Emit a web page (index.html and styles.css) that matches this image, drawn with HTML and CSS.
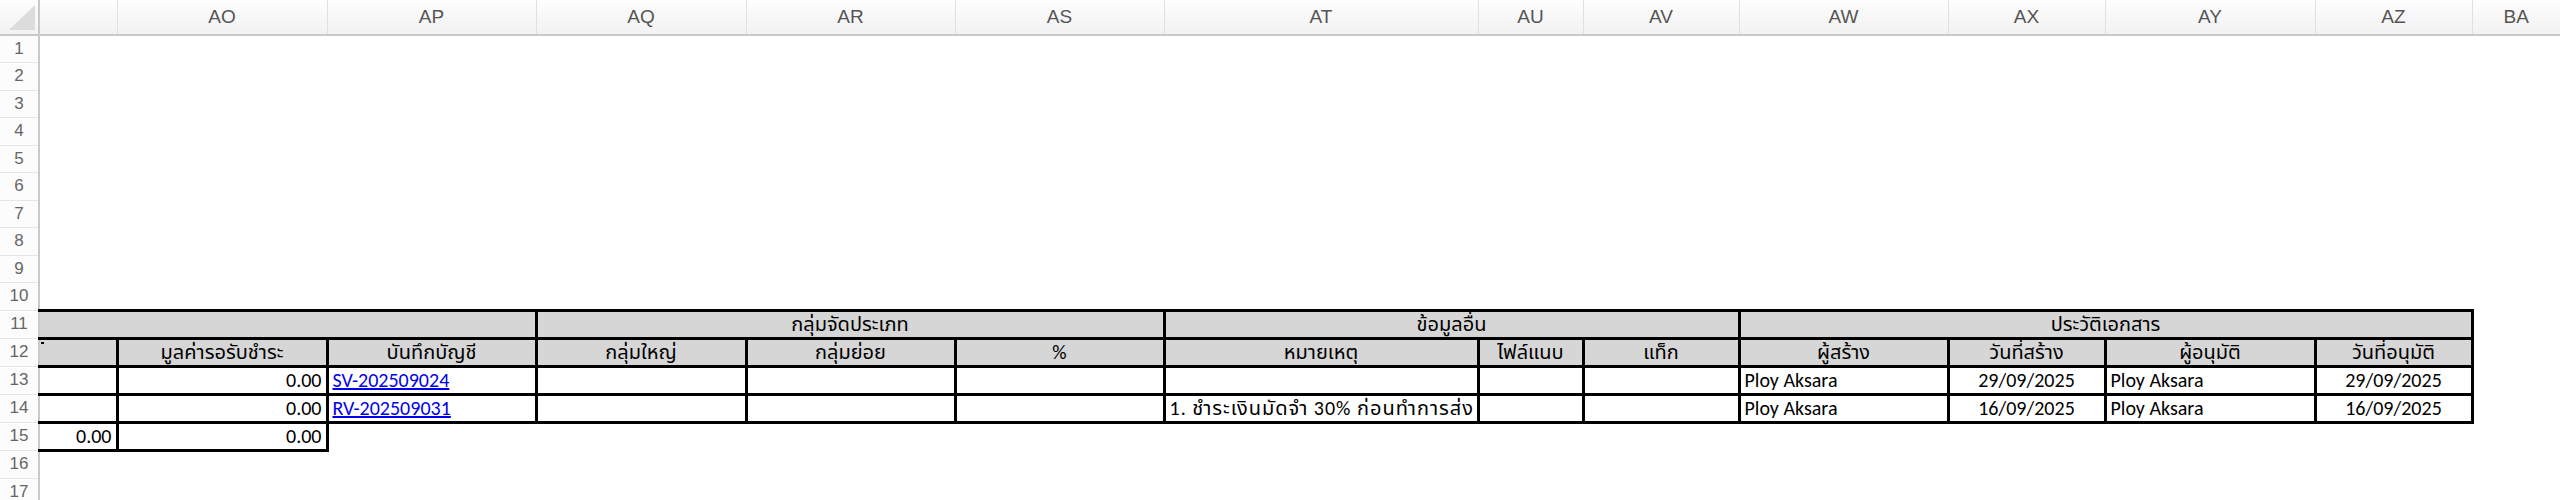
FILE: index.html
```html
<!DOCTYPE html>
<html lang="th">
<head>
<meta charset="utf-8">
<title>Sheet</title>
<link rel="stylesheet" href="styles.css">
</head>
<body>
<table class="sheet">
  <colgroup>
    <col class="c-rh"><col class="c-an"><col class="c-ao"><col class="c-ap"><col class="c-aq"><col class="c-ar"><col class="c-as"><col class="c-at"><col class="c-au"><col class="c-av"><col class="c-aw"><col class="c-ax"><col class="c-ay"><col class="c-az"><col class="c-ba">
  </colgroup>
  <thead>
    <tr class="colhead">
      <th class="corner"><div class="corner-box"><div class="corner-tri"></div></div></th>
      <th></th><th>AO</th><th>AP</th><th>AQ</th><th>AR</th><th>AS</th><th>AT</th><th>AU</th><th>AV</th><th>AW</th><th>AX</th><th>AY</th><th>AZ</th><th class="last">BA</th>
    </tr>
  </thead>
  <tbody>
    <tr class="r27"><th class="rh">1</th><td colspan="14"></td></tr>
    <tr class="r28"><th class="rh">2</th><td colspan="14"></td></tr>
    <tr class="r27"><th class="rh">3</th><td colspan="14"></td></tr>
    <tr class="r28"><th class="rh">4</th><td colspan="14"></td></tr>
    <tr class="r27"><th class="rh">5</th><td colspan="14"></td></tr>
    <tr class="r28"><th class="rh">6</th><td colspan="14"></td></tr>
    <tr class="r27"><th class="rh">7</th><td colspan="14"></td></tr>
    <tr class="r28"><th class="rh">8</th><td colspan="14"></td></tr>
    <tr class="r27"><th class="rh">9</th><td colspan="14"></td></tr>
    <tr class="r28"><th class="rh">10</th><td colspan="14"></td></tr>
    <tr class="r28 grp">
      <th class="rh">11</th>
      <td colspan="3" class="b hd nl top"></td>
      <td colspan="3" class="b hd top">กลุ่มจัดประเภท</td>
      <td colspan="3" class="b hd top">ข้อมูลอื่น</td>
      <td colspan="4" class="b hd top">ประวัติเอกสาร</td>
      <td></td>
    </tr>
    <tr class="r28">
      <th class="rh">12</th>
      <td class="b hd nl lft"><span class="tick"></span></td>
      <td class="b hd">มูลค่ารอรับชำระ</td>
      <td class="b hd">บันทึกบัญชี</td>
      <td class="b hd">กลุ่มใหญ่</td>
      <td class="b hd">กลุ่มย่อย</td>
      <td class="b hd">%</td>
      <td class="b hd">หมายเหตุ</td>
      <td class="b hd">ไฟล์แนบ</td>
      <td class="b hd">แท็ก</td>
      <td class="b hd">ผู้สร้าง</td>
      <td class="b hd">วันที่สร้าง</td>
      <td class="b hd">ผู้อนุมัติ</td>
      <td class="b hd">วันที่อนุมัติ</td>
      <td></td>
    </tr>
    <tr class="r28">
      <th class="rh">13</th>
      <td class="b nl thin-b"></td>
      <td class="b num thin-b">0.00</td>
      <td class="b thin-b"><a class="lnk" href="#">SV-202509024</a></td>
      <td class="b thin-b"></td>
      <td class="b thin-b"></td>
      <td class="b thin-b"></td>
      <td class="b thin-b"></td>
      <td class="b thin-b"></td>
      <td class="b thin-b"></td>
      <td class="b thin-b">Ploy Aksara</td>
      <td class="b ctr thin-b">29/09/2025</td>
      <td class="b thin-b">Ploy Aksara</td>
      <td class="b ctr thin-b">29/09/2025</td>
      <td></td>
    </tr>
    <tr class="r28">
      <th class="rh">14</th>
      <td class="b nl"></td>
      <td class="b num">0.00</td>
      <td class="b"><a class="lnk" href="#">RV-202509031</a></td>
      <td class="b"></td>
      <td class="b"></td>
      <td class="b"></td>
      <td class="b note">1. ชำระเงินมัดจำ 30% ก่อนทำการส่ง</td>
      <td class="b"></td>
      <td class="b"></td>
      <td class="b">Ploy Aksara</td>
      <td class="b ctr">16/09/2025</td>
      <td class="b">Ploy Aksara</td>
      <td class="b ctr">16/09/2025</td>
      <td></td>
    </tr>
    <tr class="r28">
      <th class="rh">15</th>
      <td class="b nl num">0.00</td>
      <td class="b num">0.00</td>
      <td colspan="12"></td>
    </tr>
    <tr class="r28"><th class="rh">16</th><td colspan="14"></td></tr>
    <tr class="r28"><th class="rh">17</th><td colspan="14"></td></tr>
  </tbody>
</table>
</body>
</html>
```
FILE: styles.css
```css
html, body {
  margin: 0;
  padding: 0;
  background: #ffffff;
  overflow: hidden;
}

.sheet {
  border-collapse: collapse;
  table-layout: fixed;
  width: 2560px;
  font-family: "Carlito", "Liberation Sans Narrow", "Noto Sans Thai", "Noto Sans", sans-serif;
  font-size: 20px;
  color: #000;
}

.c-rh { width: 39px; }
.c-an { width: 78px; }
.c-ao { width: 210px; }
.c-ap { width: 209px; }
.c-aq { width: 210px; }
.c-ar { width: 209px; }
.c-as { width: 209px; }
.c-at { width: 314px; }
.c-au { width: 105px; }
.c-av { width: 156px; }
.c-aw { width: 209px; }
.c-ax { width: 157px; }
.c-ay { width: 210px; }
.c-az { width: 157px; }
.c-ba { width: 88px; }

.colhead th {
  height: 34px;
  padding: 0;
  background: linear-gradient(#fdfdfd, #f2f2f2);
  border-right: 1px solid #e1e1e1;
  border-bottom: 2px solid #c9c9c9;
  color: #555;
  font-family: "Liberation Sans Narrow", "Liberation Sans", sans-serif;
  font-weight: normal;
  font-size: 19px;
  text-align: center;
  vertical-align: middle;
}

.colhead th.corner {
  border-right: 2px solid #c9c9c9;
}

.colhead th.last {
  border-right: none;
}

.corner-box {
  height: 34px;
  display: flex;
  justify-content: flex-end;
  align-items: flex-end;
  padding: 0 3px 4px 0;
  box-sizing: border-box;
}

.corner-tri {
  width: 26px;
  height: 25px;
  background: #dcdcdc;
  clip-path: polygon(100% 0, 100% 100%, 0 100%);
}

.r27 { height: 27px; }
.r28 { height: 28px; }

th.rh {
  padding: 0;
  background: #fcfcfc;
  border-right: 2px solid #c9c9c9;
  border-bottom: 1px solid #e6e6e6;
  color: #666;
  font-family: "Liberation Sans", "Open Sans", sans-serif;
  font-weight: normal;
  font-size: 17px;
  text-align: center;
  vertical-align: middle;
}

td {
  padding: 0 4px 1px 4px;
  white-space: nowrap;
  overflow: hidden;
  vertical-align: bottom;
  line-height: 24px;
}

td.b {
  border: 3px solid #000;
}

td.top {
  border-top: 3px solid #000;
}

td.thin-b {
  border-bottom: 2px solid #111;
}

td.nl {
  border-left: none;
}

td.hd {
  background: #d6d6d6;
  text-align: center;
}

td.lft {
  text-align: left;
  padding-left: 1px;
}

td.num {
  text-align: right;
}

td.ctr {
  text-align: center;
}

td.note {
  letter-spacing: 1px;
}

.lnk {
  color: #0000ee;
  text-decoration: underline;
}

.tick {
  display: inline-block;
  width: 3px;
  height: 2px;
  background: #000;
  vertical-align: top;
  margin-top: 2px;
}
```
